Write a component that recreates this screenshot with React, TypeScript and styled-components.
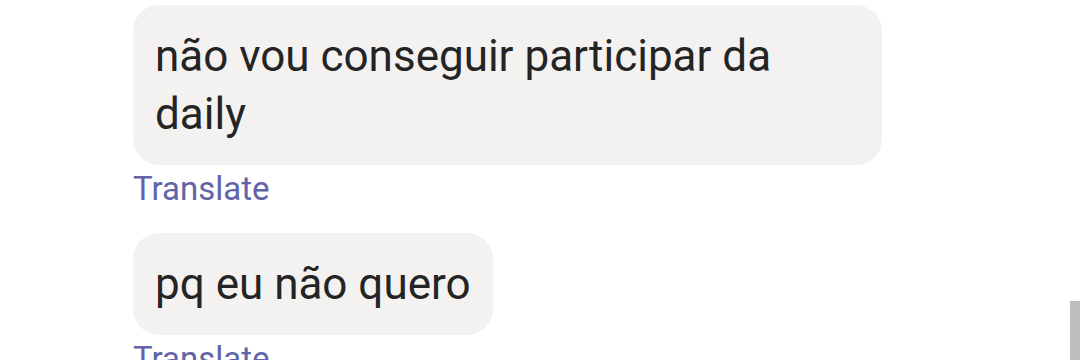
import React from 'react';
import styled, { createGlobalStyle } from 'styled-components';

const messages = [
    { id: 1, text: 'não vou conseguir participar da daily' },
    { id: 2, text: 'pq eu não quero' },
];

const Global = createGlobalStyle`
    html, body {
        margin: 0;
        padding: 0;
        background: #fff;
        overflow: hidden;
    }
    body {
        font-family: Roboto, 'Noto Sans', sans-serif;
    }
`;

const Wrap = styled.div`
    position: relative;
    width: 1080px;
    height: 360px;
    overflow: hidden;
    box-sizing: border-box;
    padding: 5px 0 0 133px;
    display: flex;
    flex-direction: column;
    align-items: flex-start;
`;

const Group = styled.div`
    display: flex;
    flex-direction: column;
    align-items: flex-start;
    margin-bottom: 23px;
`;

const Bubble = styled.div`
    max-width: 705px;
    background: #f3f2f1;
    border-radius: 26px;
    padding: 22px;
    color: #242424;
    font-size: 44px;
    line-height: 58px;
`;

const Translate = styled.span`
    color: #6264a7;
    font-size: 33px;
    line-height: 42px;
    margin-top: 3px;
`;

const Thumb = styled.div`
    position: absolute;
    right: 0;
    top: 301px;
    width: 10px;
    height: 59px;
    background: #bdbdbd;
`;

const App = () => {
    return (
        <>
            <Global />
            <Wrap>
                {messages.map((item) => (
                    <Group key={item.id}>
                        <Bubble>{item.text}</Bubble>
                        <Translate>Translate</Translate>
                    </Group>
                ))}
                <Thumb />
            </Wrap>
        </>
    );
};

export default App;
